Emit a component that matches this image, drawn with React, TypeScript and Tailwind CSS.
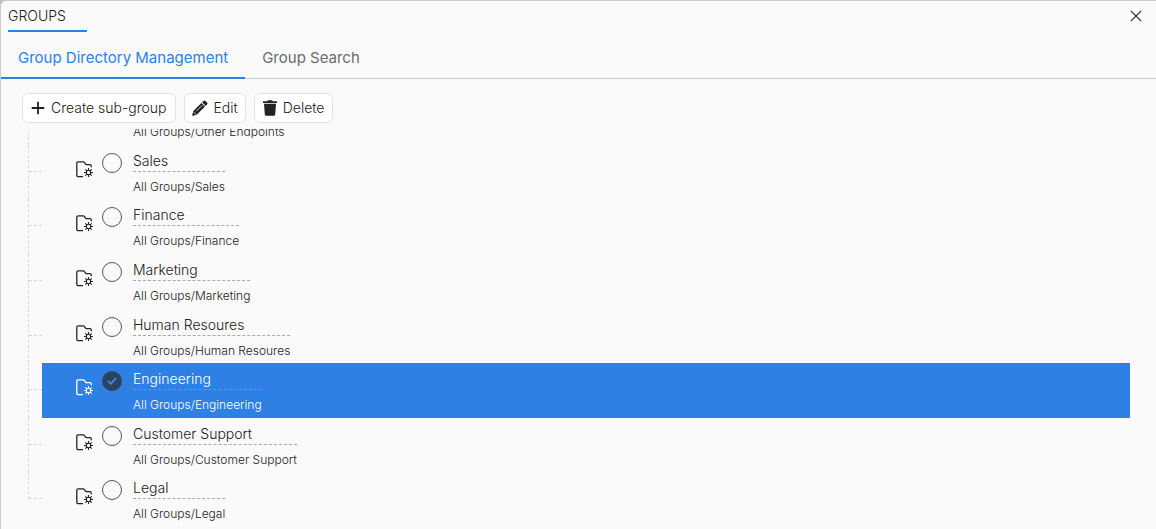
import { useState } from 'react';
import clsx from 'clsx';

interface Group {
  name: string;
}

const groups: Group[] = [
  { name: 'Other Endpoints' },
  { name: 'Sales' },
  { name: 'Finance' },
  { name: 'Marketing' },
  { name: 'Human Resoures' },
  { name: 'Engineering' },
  { name: 'Customer Support' },
  { name: 'Legal' },
];

const tabs = ['Group Directory Management', 'Group Search'];

function PlusIcon() {
  return (
    <svg viewBox="0 0 14 14" className="size-[14px]" fill="none" stroke="currentColor" strokeWidth="1.8" aria-hidden="true">
      <path d="M7 .7v12.6M.7 7h12.6" />
    </svg>
  );
}

function PencilIcon() {
  return (
    <svg viewBox="0 0 16 16" className="size-4" aria-hidden="true">
      <path
        fill="currentColor"
        d="M11.4 1a1.5 1.5 0 0 1 2.1 0l1.5 1.5a1.5 1.5 0 0 1 0 2.1l-1.3 1.3-3.6-3.6zM9.4 3 13 6.6 5 14.6.9 15.8a.6.6 0 0 1-.7-.7L1.4 11z"
      />
      <path d="m10.3 5.2-5.9 5.9" fill="none" stroke="#fff" strokeWidth=".8" />
      <path d="M1.9 12.2l1.9 1.9" fill="none" stroke="#fff" strokeWidth=".8" />
    </svg>
  );
}

function TrashIcon() {
  return (
    <svg viewBox="0 0 14 16" className="h-4 w-[14px]" fill="currentColor" aria-hidden="true">
      <path d="M0 1.2h4.2L4.9.2h4.2l.7 1H14v1.7H0zM1 3.7h12l-.8 10.7a1.5 1.5 0 0 1-1.5 1.4H3.3a1.5 1.5 0 0 1-1.5-1.4z" />
    </svg>
  );
}

function CloseIcon() {
  return (
    <svg viewBox="0 0 12 12" className="size-3" fill="none" stroke="currentColor" strokeWidth="1.1" aria-hidden="true">
      <path d="m1 1 10 10M11 1 1 11" />
    </svg>
  );
}

function FolderGearIcon() {
  return (
    <svg viewBox="0 0 17 17" className="size-[17px] shrink-0" fill="none" stroke="currentColor" strokeWidth="1.3" aria-hidden="true">
      <path d="M7 15.6H2.2A1.4 1.4 0 0 1 .8 14.2V2.2A1.4 1.4 0 0 1 2.2.8h5.1q.6 0 1 .5l1.5 2q.3.4.9.4h3.1a1.5 1.5 0 0 1 1.5 1.5v1.1" />
      <circle cx="12.5" cy="11.5" r="2.2" strokeWidth="1.1" />
      <path
        strokeWidth="1.1"
        d="M12.5 7v2M12.5 14v2M8 11.5h2M15 11.5h2M9.3 8.3l1.5 1.5M14.2 13.2l1.5 1.5M15.7 8.3l-1.5 1.5M10.8 13.2l-1.5 1.5"
      />
    </svg>
  );
}

interface GroupRowProps {
  group: Group;
  last: boolean;
  selected: boolean;
  onSelect: () => void;
}

function GroupRow({ group, last, selected, onSelect }: GroupRowProps) {
  return (
    <li className="flex">
      <div className={clsx('w-[14px] shrink-0 border-l border-dashed border-[#d8d8d8]', last && 'h-[27px]')}>
        <div className="h-[27px] border-b border-dashed border-[#d8d8d8]" />
      </div>
      <label
        className={clsx(
          'flex flex-1 cursor-pointer items-start pl-[34px]',
          selected ? 'bg-[#2f80e4] text-white' : 'text-[#222]',
        )}
      >
        <span className="pt-4">
          <FolderGearIcon />
        </span>
        <span className="mt-2 ml-[9px] grid size-5 shrink-0 place-items-center">
          <input
            type="radio"
            name="group"
            checked={selected}
            onChange={onSelect}
            className="col-start-1 row-start-1 size-5 appearance-none rounded-full border border-[#555] checked:border-[#2c4360] checked:bg-[#2c4360]"
          />
          {selected && (
            <svg viewBox="0 0 10 8" className="pointer-events-none col-start-1 row-start-1 h-2 w-[10px]" fill="none" stroke="#3d8ff5" strokeWidth="1.7" aria-hidden="true">
              <path d="m1 4 2.8 2.8L9 1.2" />
            </svg>
          )}
        </span>
        <span className="ml-[11px] flex flex-col pt-[6px]">
          <span
            className={clsx(
              'h-[21px] border-b border-dashed text-sm leading-5 font-light',
              selected ? 'border-[#7b93b0]' : 'border-[#aaa]',
            )}
          >
            {group.name}
          </span>
          <span className="mt-[7px] text-xs leading-4 font-light">All Groups/{group.name}</span>
        </span>
      </label>
    </li>
  );
}

const toolButton =
  'flex h-[30px] items-center gap-[6px] rounded-md border border-[#e2e2e2] bg-white text-sm font-light text-[#222]';

export default function App() {
  const [tab, setTab] = useState(tabs[0]);
  const [selected, setSelected] = useState('Engineering');

  return (
    <div className="h-screen bg-[#bbb] font-['Inter',sans-serif]">
      <main className="flex h-full flex-col overflow-hidden rounded-tl-md border-t border-l border-[#ccc] bg-[#fafafa]">
        <header className="flex items-start justify-between pr-[14px] pl-[7px]">
          <h1 className="h-[31px] w-[79px] border-b-2 border-[#2f80e4] pt-[5px] text-sm leading-5 font-light text-[#222]">
            GROUPS
          </h1>
          <button type="button" aria-label="Close" className="mt-[9px] text-[#333]">
            <CloseIcon />
          </button>
        </header>

        <div role="tablist" className="flex h-[47px] shrink-0 border-b border-[#ccc]">
          {tabs.map((t) => (
            <button
              key={t}
              type="button"
              role="tab"
              aria-selected={t === tab}
              onClick={() => setTab(t)}
              className={clsx(
                '-mb-px border-b-2 px-[17px] pt-[7px] text-[15px]',
                t === tab ? 'border-[#2f80e4] text-[#2f80e4]' : 'border-transparent text-[#6b6b6b]',
              )}
            >
              {t}
            </button>
          ))}
        </div>

        <div className="flex shrink-0 gap-2 pt-[14px] pl-[21px]">
          <button type="button" className={clsx(toolButton, 'px-2')}>
            <PlusIcon />
            Create sub-group
          </button>
          <button type="button" className={clsx(toolButton, 'px-[7px]')}>
            <PencilIcon />
            Edit
          </button>
          <button type="button" className={clsx(toolButton, 'px-2')}>
            <TrashIcon />
            Delete
          </button>
        </div>

        <section className="mt-[6px] flex-1 overflow-hidden pr-[26px] pl-[27px]">
          <ul className="-mt-[39px] grid h-[437px] auto-rows-fr">
            {groups.map((g, i) => (
              <GroupRow
                key={g.name}
                group={g}
                last={i === groups.length - 1}
                selected={g.name === selected}
                onSelect={() => setSelected(g.name)}
              />
            ))}
          </ul>
        </section>
      </main>
    </div>
  );
}
